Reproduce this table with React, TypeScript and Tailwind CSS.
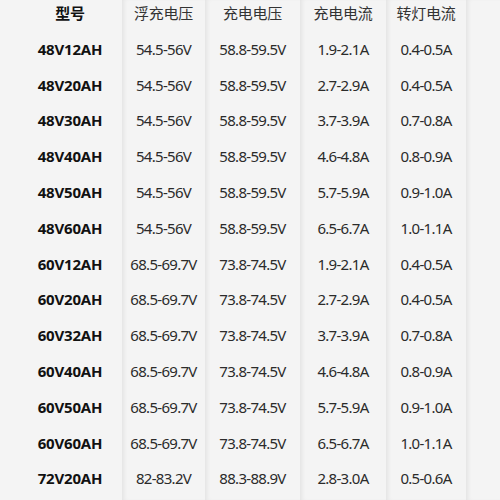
const header = ["型号", "浮充电压", "充电电压", "充电电流", "转灯电流"];

const rows: string[][] = [
  ["48V12AH", "54.5-56V", "58.8-59.5V", "1.9-2.1A", "0.4-0.5A"],
  ["48V20AH", "54.5-56V", "58.8-59.5V", "2.7-2.9A", "0.4-0.5A"],
  ["48V30AH", "54.5-56V", "58.8-59.5V", "3.7-3.9A", "0.7-0.8A"],
  ["48V40AH", "54.5-56V", "58.8-59.5V", "4.6-4.8A", "0.8-0.9A"],
  ["48V50AH", "54.5-56V", "58.8-59.5V", "5.7-5.9A", "0.9-1.0A"],
  ["48V60AH", "54.5-56V", "58.8-59.5V", "6.5-6.7A", "1.0-1.1A"],
  ["60V12AH", "68.5-69.7V", "73.8-74.5V", "1.9-2.1A", "0.4-0.5A"],
  ["60V20AH", "68.5-69.7V", "73.8-74.5V", "2.7-2.9A", "0.4-0.5A"],
  ["60V32AH", "68.5-69.7V", "73.8-74.5V", "3.7-3.9A", "0.7-0.8A"],
  ["60V40AH", "68.5-69.7V", "73.8-74.5V", "4.6-4.8A", "0.8-0.9A"],
  ["60V50AH", "68.5-69.7V", "73.8-74.5V", "5.7-5.9A", "0.9-1.0A"],
  ["60V60AH", "68.5-69.7V", "73.8-74.5V", "6.5-6.7A", "1.0-1.1A"],
  ["72V20AH", "82-83.2V", "88.3-88.9V", "2.8-3.0A", "0.5-0.6A"],
];

const widths = ["w-[122px]", "w-[83px]", "w-[95px]", "w-[86px]", "w-[80px]", "flex-1"];

export default function App() {
  return (
    <div
      className="w-[500px] h-[500px] overflow-hidden bg-[#f4f4f4] flex"
      style={{ fontFamily: '"Noto Sans", "Noto Sans CJK SC", sans-serif' }}
    >
      {widths.map((w, c) => (
        <div
          key={c}
          className={`${w} shrink-0 flex flex-col items-center ${
            c > 0 ? "shadow-[inset_4px_0_4px_-2px_rgba(0,0,0,0.07)]" : ""
          }`}
        >
          {c < 5 && (
            <>
              <div className="h-[31px] w-full flex items-center justify-center pb-[4px] text-[15px] text-[#333] tracking-[-0.3px]">
                <span style={{ fontFamily: '"Noto Sans CJK SC", sans-serif' }} className={c === 0 ? "font-bold text-[#111] pl-[18px]" : ""}>
                  {header[c]}
                </span>
              </div>
              {rows.map((r) => (
                <div
                  key={r[0]}
                  className={`h-[35.8px] leading-[20px] shrink-0 w-full flex items-center justify-center ${
                    c === 0
                      ? "font-bold text-[15px] text-[#111] tracking-[-0.2px] pl-[18px]"
                      : "text-[15px] text-[#2b2b2b] tracking-[-0.7px]"
                  }`}
                >
                  {r[c]}
                </div>
              ))}
            </>
          )}
        </div>
      ))}
    </div>
  );
}
